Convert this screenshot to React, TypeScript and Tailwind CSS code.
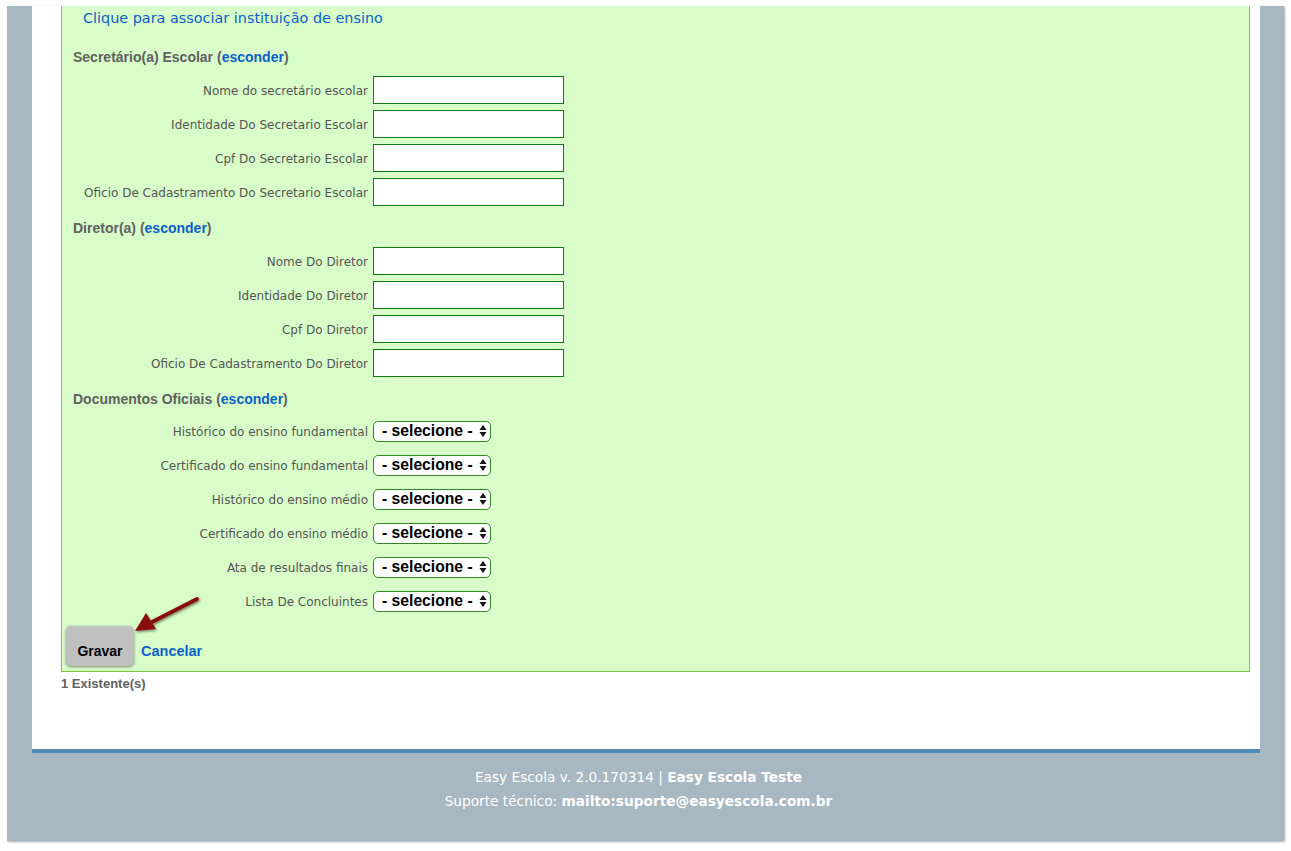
import React from "react";

const verdana = { fontFamily: '"DejaVu Sans", Verdana, sans-serif' };
const arial = { fontFamily: '"Liberation Sans", Arial, sans-serif' };

function InputRow({ label }: { label: string }) {
  return (
    <div className="flex h-[34px] items-center">
      <div className="w-[311px] pr-[5px] pt-[2px] text-right text-[12px] text-[#555555]" style={verdana}>
        {label}
      </div>
      <div className="h-[28px] w-[191px] border border-[#117a11] bg-white" />
    </div>
  );
}

function SelectRow({ label }: { label: string }) {
  return (
    <div className="flex h-[34px] items-center">
      <div className="w-[311px] pr-[5px] pt-[2px] text-right text-[12px] text-[#555555]" style={verdana}>
        {label}
      </div>
      <div className="flex h-[21px] w-[118px] items-center justify-between rounded-[5px] border border-[#2f8a1f] bg-white pl-[8px] pr-[3px]">
        <span className="text-[15.7px] font-bold leading-none text-black" style={arial}>
          - selecione -
        </span>
        <svg width="8" height="14" viewBox="0 0 8 14">
          <path d="M4 1 L7.5 6 L0.5 6 Z" fill="#111" />
          <path d="M4 13 L7.5 8 L0.5 8 Z" fill="#111" />
        </svg>
      </div>
    </div>
  );
}

function Heading({ title, className = "" }: { title: string; className?: string }) {
  return (
    <div className={`flex h-[24px] items-center pl-[11px] text-[14px] font-bold text-[#606060] ${className}`} style={arial}>
      {title} (<span className="text-[#0d5fcc]">esconder</span>)
    </div>
  );
}

export default function App() {
  return (
    <div className="h-[851px] w-[1291px] bg-white pl-[7px] pr-[7px] pt-[6px] pb-[10px]">
      <div className="flex h-[835px] flex-col bg-[#a8b8c2] shadow-[1px_1px_2px_rgba(0,0,0,0.35)]">
        <div className="mx-[25px] mr-[24px] flex h-[743px] flex-col bg-white pl-[29px] pr-[10px]">
          <div className="relative border-x border-b border-[#7cc83a] bg-[#d8fdc8] pb-[5px]">
            <div className="flex h-[24px] items-center pl-[21px] pt-[2px] text-[14.4px] text-[#0d5fcc]" style={verdana}>
              Clique para associar instituição de ensino
            </div>
            <Heading title="Secretário(a) Escolar" className="mt-[15px]" />
            <div className="mt-[4px]">
              <InputRow label="Nome do secretário escolar" />
              <InputRow label="Identidade Do Secretario Escolar" />
              <InputRow label="Cpf Do Secretario Escolar" />
              <InputRow label="Oficio De Cadastramento Do Secretario Escolar" />
            </div>
            <Heading title="Diretor(a)" className="mt-[7px]" />
            <div className="mt-[4px]">
              <InputRow label="Nome Do Diretor" />
              <InputRow label="Identidade Do Diretor" />
              <InputRow label="Cpf Do Diretor" />
              <InputRow label="Oficio De Cadastramento Do Diretor" />
            </div>
            <Heading title="Documentos Oficiais" className="mt-[7px]" />
            <div className="mt-[3px]">
              <SelectRow label="Histórico do ensino fundamental" />
              <SelectRow label="Certificado do ensino fundamental" />
              <SelectRow label="Histórico do ensino médio" />
              <SelectRow label="Certificado do ensino médio" />
              <SelectRow label="Ata de resultados finais" />
              <SelectRow label="Lista De Concluintes" />
            </div>
            <div className="mt-[8px] flex items-end pl-[4px]">
              <div
                className="flex h-[40px] w-[68px] items-end justify-center rounded-[5px] bg-[#c0c0c0] pb-[4px] text-[14px] font-bold text-black shadow-[0_1px_3px_rgba(0,0,0,0.45)]"
                style={arial}
              >
                Gravar
              </div>
              <div className="ml-[7px] pb-[3px] text-[14.5px] font-bold text-[#0d5fcc]" style={arial}>
                Cancelar
              </div>
            </div>
            <svg
              className="absolute left-[68px] top-[587px]"
              width="80"
              height="50"
              viewBox="0 0 80 50"
            >
              <defs>
                <filter id="sh" x="-20%" y="-20%" width="140%" height="140%">
                  <feDropShadow dx="1" dy="1.5" stdDeviation="1.2" floodColor="#000" floodOpacity="0.45" />
                </filter>
              </defs>
              <g filter="url(#sh)">
                <path d="M67 6 L20 30" stroke="#8a0c0c" strokeWidth="4" strokeLinecap="round" />
                <path d="M5 38 L16 20 L26 36 Z" fill="#8a0c0c" />
              </g>
            </svg>
          </div>
          <div className="mt-[2px] text-[13px] font-bold text-[#606060]" style={arial}>
            1 Existente(s)
          </div>
        </div>
        <div className="mx-[25px] mr-[24px] h-[4px] bg-[#4f8bb6]" />
        <div className="flex flex-col items-center pr-[14px] pt-[12px] text-[13.7px] text-white" style={verdana}>
          <div className="h-[24px] leading-[24px]">
            Easy Escola v. 2.0.170314 | <span className="font-bold">Easy Escola Teste</span>
          </div>
          <div className="h-[24px] leading-[24px]">
            Suporte técnico: <span className="font-bold">mailto:suporte@easyescola.com.br</span>
          </div>
        </div>
      </div>
    </div>
  );
}
